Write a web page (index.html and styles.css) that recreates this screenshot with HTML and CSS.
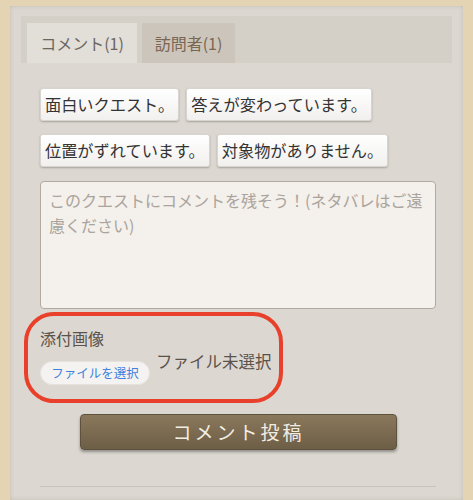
FILE: index.html
```html
<!DOCTYPE html>
<html lang="ja">
<head>
<meta charset="utf-8">
<link rel="stylesheet" href="styles.css">
</head>
<body>
<div class="panel">
  <div class="tabs">
    <div class="tab active">コメント(1)</div>
    <div class="tab">訪問者(1)</div>
  </div>
  <div class="content">
    <div class="quick">
      <button class="qbtn">面白いクエスト。</button>
      <button class="qbtn">答えが変わっています。</button>
      <button class="qbtn">位置がずれています。</button>
      <button class="qbtn">対象物がありません。</button>
    </div>
    <textarea class="comment" placeholder="このクエストにコメントを残そう！(ネタバレはご遠慮ください)"></textarea>
    <div class="attach">
      <div class="attach-label">添付画像</div>
      <div class="file-row">
        <span class="file-btn">ファイルを選択</span>
        <span class="file-none">ファイル未選択</span>
      </div>
    </div>
    <div class="submit-wrap">
      <button class="submit">コメント投稿</button>
    </div>
    <hr class="sep">
  </div>
</div>
</body>
</html>
```
FILE: styles.css
```css
* { box-sizing: border-box; }
html, body { margin: 0; padding: 0; }
body {
  width: 473px;
  height: 500px;
  overflow: hidden;
  background: #e4d4b3;
  font-family: "Noto Sans CJK JP", "Liberation Sans", sans-serif;
  padding: 6px 10px 0 10px;
}
.panel {
  background: #dcd8d1;
  height: 494px;
  padding: 10px 11px 0 11px;
  box-shadow: inset 0 0 4px rgba(150,140,120,0.35);
  overflow: hidden;
}
.tabs {
  display: flex;
  gap: 5px;
  height: 47px;
  padding: 7px 6px 0 6px;
  background: #d4cfc7;
}
.tab {
  width: 93px;
  height: 40px;
  background: #cbc5bc;
  color: #7b6650;
  font-size: 16px;
  line-height: 40px;
  text-align: center;
  font-family: "Noto Sans CJK JP", sans-serif;
}
.tab.active {
  width: 110px;
  background: #e2ded8;
  color: #6a6661;
}
.content {
  padding: 25px 18px 0 19px;
}
.quick {
  display: flex;
  flex-wrap: wrap;
  column-gap: 7px;
  row-gap: 13px;
}
.qbtn {
  height: 33px;
  padding: 0 4px;
  font-family: "Noto Sans CJK JP", sans-serif;
  font-size: 16.2px;
  color: #333;
  background: linear-gradient(#ffffff, #f1f0ee);
  border: 1px solid #d8d5d0;
  border-radius: 3px;
  box-shadow: 0 1px 2px rgba(0,0,0,0.25);
  line-height: 31px;
}
.comment {
  display: block;
  margin-top: 14px;
  width: 396px;
  height: 128px;
  background: #f4f0eb;
  border: 1px solid #b2aaa0;
  border-radius: 4px;
  padding: 6px 2px 6px 8px;
  font-family: "Noto Sans CJK JP", sans-serif;
  font-size: 16px;
  line-height: 25px;
  resize: none;
}
.comment::placeholder { color: #aaa49d; }
.attach {
  margin: 3px 0 0 -16px;
  width: 259px;
  height: 91px;
  border: 4px solid #e8402a;
  border-radius: 30px;
  padding: 10px 0 0 12px;
}
.attach-label {
  font-size: 16px;
  color: #5b524a;
  line-height: 24px;
}
.file-row {
  display: flex;
  align-items: flex-start;
  gap: 6px;
  margin-top: 7px;
}
.file-btn {
  width: 110px;
  height: 24px;
  border-radius: 12px;
  background: #f4f3f1;
  border: 1px solid #e6e3df;
  color: #3f80df;
  font-size: 12.5px;
  line-height: 22px;
  text-align: center;
  margin-top: 4px;
}
.file-none {
  font-size: 16.5px;
  color: #5b524a;
  line-height: 24px;
  margin-top: -8px;
}
.submit-wrap {
  display: flex;
  margin-top: 11px;
  padding-left: 40px;
}
.submit {
  width: 317px;
  height: 36px;
  background: linear-gradient(#8a785b, #6d5e47);
  border: 1px solid #5e513d;
  border-radius: 4px;
  box-shadow: 0 2px 3px rgba(0,0,0,0.35);
  color: #f2ede3;
  font-family: "Noto Sans CJK JP", sans-serif;
  font-size: 19px;
  letter-spacing: 3px;
  line-height: 34px;
  padding: 0;
}
.sep {
  margin: 36px 0 0 0;
  width: 396px;
  border: 0;
  border-top: 1px solid #c8c2b8;
}
```
